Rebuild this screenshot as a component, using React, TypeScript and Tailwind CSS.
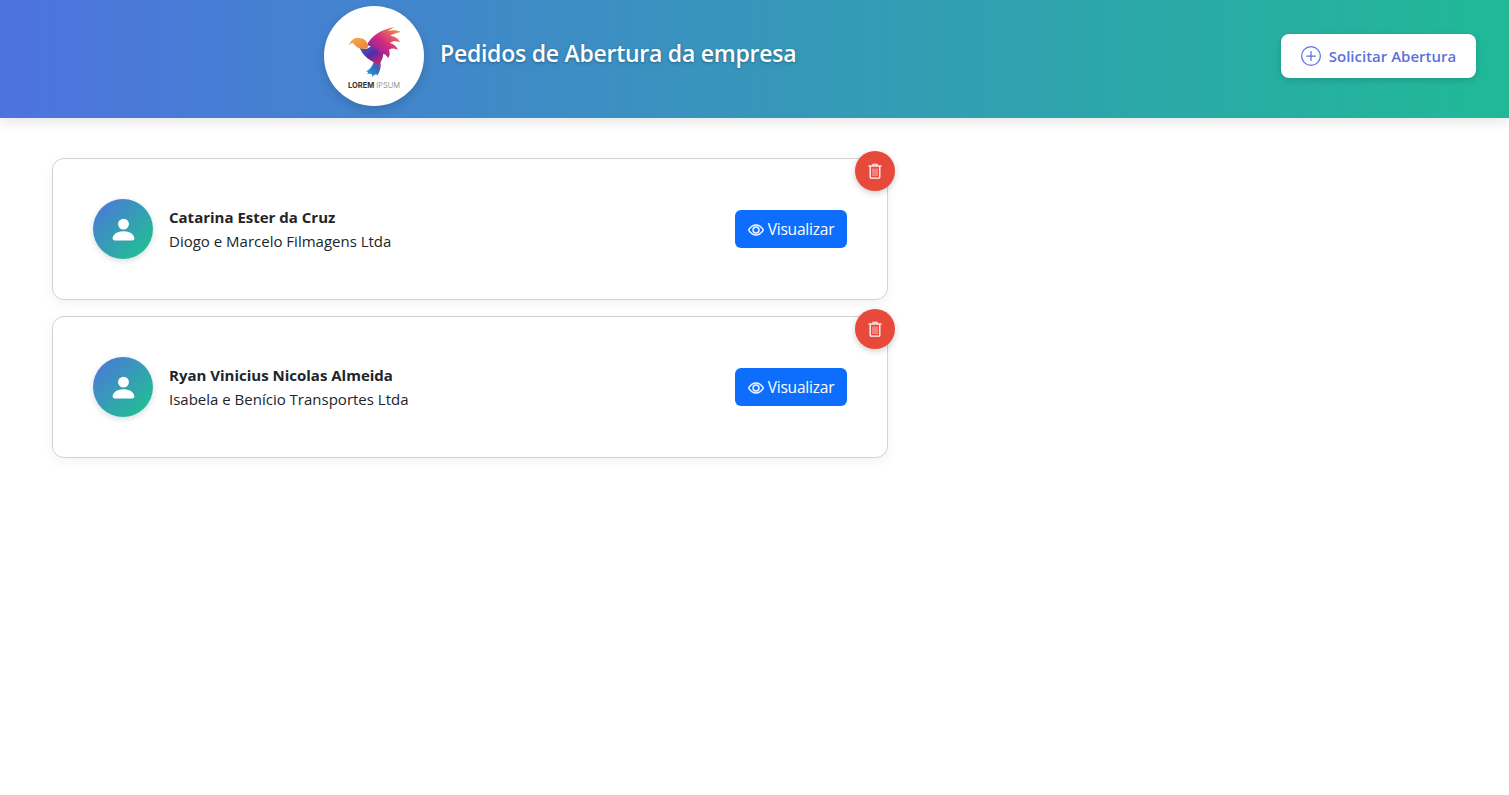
import { BsEye, BsPersonFill, BsPlusCircle } from "react-icons/bs";

function Bird() {
  return (
    <svg width="52" height="52" viewBox="0 0 52 52" className="block">
      <defs>
        <linearGradient id="hd" x1="0" y1="0" x2="1" y2="1">
          <stop offset="0" stopColor="#f6b04a" />
          <stop offset="1" stopColor="#e8823e" />
        </linearGradient>
        <linearGradient id="bd" x1="0" y1="0" x2="1" y2="1">
          <stop offset="0" stopColor="#2f6cc0" />
          <stop offset="0.5" stopColor="#5a2aa8" />
          <stop offset="1" stopColor="#e0245e" />
        </linearGradient>
        <linearGradient id="wg" x1="0" y1="1" x2="1" y2="0">
          <stop offset="0" stopColor="#5a1fb0" />
          <stop offset="0.5" stopColor="#d42a80" />
          <stop offset="1" stopColor="#f7a63c" />
        </linearGradient>
        <linearGradient id="tl" x1="1" y1="0" x2="0" y2="1">
          <stop offset="0" stopColor="#d81e6a" />
          <stop offset="0.45" stopColor="#2a6fc4" />
          <stop offset="1" stopColor="#28b0d8" />
        </linearGradient>
      </defs>
      <path d="M30 32 C33 38 32 44 28 50 C28 47 26 48 23 51 C24 48 22 47 18 48 C20 46 19 45 16 46 C22 43 25 38 25 33Z" fill="url(#tl)" />
      <path d="M10 20 C14 24 18 24 22 20 L34 24 C35 30 33 35 30 38 C22 36 13 30 10 20Z" fill="url(#bd)" />
      <path d="M18 19 C22 10 32 3 46 1 C42 3 40 4 39 5 C43 4 48 4 52 6 C47 7 43 8 41 10 C45 10 49 12 51 16 C47 15 43 15 41 17 C45 18 48 21 49 24 C45 22 42 22 40 24 C41 27 41 30 39 32 C37 28 34 27 32 29 C31 25 24 21 18 19Z" fill="url(#wg)" />
      <path d="M0 20 C1 15 5 11 10 12 C15 12 18 15 19 19 C20 22 17 23 14 23 C10 23 6 20 4 17 C2 17 1 18 0 20Z" fill="url(#hd)" />
    </svg>
  );
}

function Trash() {
  return (
    <svg width="14" height="16" viewBox="0 0 14 16" fill="none" stroke="currentColor" className="block">
      <path d="M0.5 3H13.5" strokeWidth="1.3" />
      <path d="M5 3V1.2H9V3" strokeWidth="1.1" />
      <path d="M2.2 3.4V14.2C2.2 14.8 2.6 15.2 3.2 15.2H10.8C11.4 15.2 11.8 14.8 11.8 14.2V3.4" strokeWidth="1.3" />
      <path d="M5 5.5V13M7 5.5V13M9 5.5V13" strokeWidth="1" stroke="#ffb3c6" />
    </svg>
  );
}

function Card({ name, company }: { name: string; company: string }) {
  return (
    <div className="relative flex h-[142px] w-[836px] items-center justify-between rounded-xl border border-[#d2d2d2] bg-white px-10 shadow-[0_4px_12px_rgba(0,0,0,0.05)]">
      <div className="flex items-center gap-4">
        <div className="flex h-[60px] w-[60px] items-center justify-center rounded-full bg-[linear-gradient(135deg,#4e73df,#1cc88a)] pt-px text-[29px] text-white shadow-[0_2px_6px_rgba(0,0,0,0.15)]">
          <BsPersonFill />
        </div>
        <div className="text-[15px] leading-6 text-[#212529]">
          <div className="font-bold">{name}</div>
          <div>{company}</div>
        </div>
      </div>
      <button className="flex h-[38px] w-[112px] items-center justify-center gap-1 rounded-md bg-[#0d6efd] pt-px text-[15.5px] tracking-[-0.2px] text-white">
        <BsEye className="text-[16px] [stroke-width:0.5px] stroke-white" />
        Visualizar
      </button>
      <button className="absolute -top-2 -right-2 flex h-10 w-10 items-center justify-center rounded-full bg-[#e74a3b] text-white shadow-[0_2px_6px_rgba(0,0,0,0.2)]">
        <Trash />
      </button>
    </div>
  );
}

export default function App() {
  return (
    <div className="min-h-[795px] bg-white font-['Open_Sans','Noto_Sans',sans-serif]">
      <header className="flex h-[118px] items-start justify-between bg-[linear-gradient(90deg,#4e73df,#20b997)] pr-[33px] pl-[324px] shadow-[0_4px_12px_rgba(0,0,0,0.1)]">
        <div className="flex items-start gap-4 pt-1.5">
          <div className="flex h-[100px] w-[100px] flex-col items-center rounded-full bg-white pt-5 shadow-[0_4px_10px_rgba(0,0,0,0.15)]">
            <div className="ml-[2px]">
              <Bird />
            </div>
            <div className="mt-[3px] font-['Inter',sans-serif] text-[7.5px] leading-[9px] whitespace-nowrap text-[#333]">
              <span className="font-bold">LOREM</span> <span className="font-light text-[#777]">IPSUM</span>
            </div>
          </div>
          <h1 className="pt-[29px] text-[23px] leading-9 font-semibold tracking-[-0.25px] text-white [text-shadow:0_1px_3px_rgba(0,0,0,0.3)]">
            Pedidos de Abertura da empresa
          </h1>
        </div>
        <div className="pt-[34px]">
          <button className="flex h-11 w-[195px] items-center justify-center gap-2 rounded-lg bg-white text-[15px] font-semibold text-[#5a72e0] shadow-[0_2px_6px_rgba(0,0,0,0.15)]">
            <BsPlusCircle className="text-[20px]" />
            Solicitar Abertura
          </button>
        </div>
      </header>
      <main className="flex flex-col gap-4 pt-10 pl-[52px]">
        <Card name="Catarina Ester da Cruz" company="Diogo e Marcelo Filmagens Ltda" />
        <Card name="Ryan Vinicius Nicolas Almeida" company="Isabela e Benício Transportes Ltda" />
      </main>
    </div>
  );
}
